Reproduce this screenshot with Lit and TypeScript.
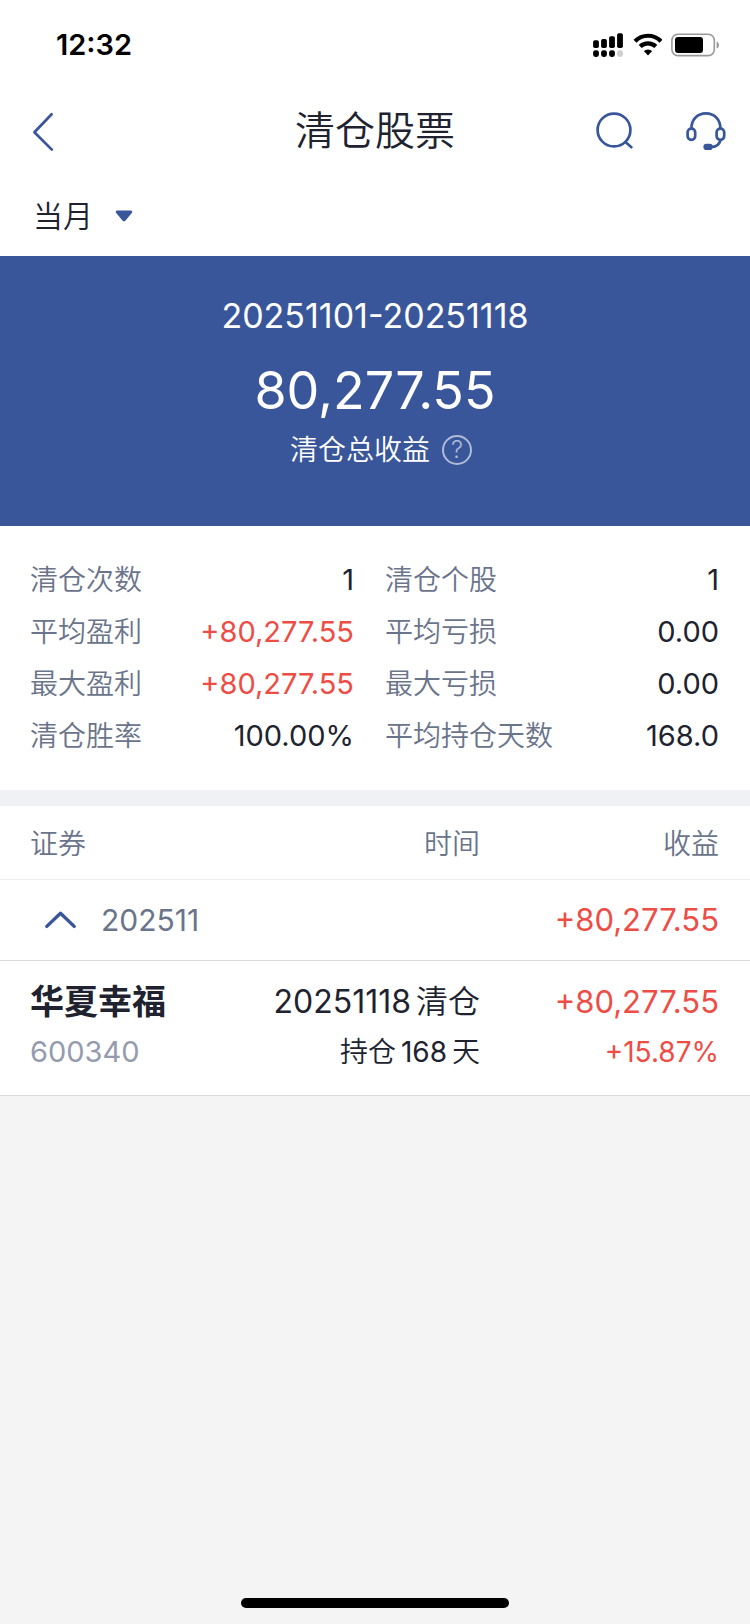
import { LitElement, html, svg, css, nothing } from "lit";
import { customElement, state } from "lit/decorators.js";
import { classMap } from "lit/directives/class-map.js";

interface Stat {
  label: string;
  value: string;
  gain?: boolean;
}

interface Holding {
  name: string;
  code: string;
  closedOn: string;
  days: number;
  profit: string;
  rate: string;
}

const STATS: Stat[] = [
  { label: "清仓次数", value: "1" },
  { label: "清仓个股", value: "1" },
  { label: "平均盈利", value: "+80,277.55", gain: true },
  { label: "平均亏损", value: "0.00" },
  { label: "最大盈利", value: "+80,277.55", gain: true },
  { label: "最大亏损", value: "0.00" },
  { label: "清仓胜率", value: "100.00%" },
  { label: "平均持仓天数", value: "168.0" },
];

const HOLDINGS: Holding[] = [
  {
    name: "华夏幸福",
    code: "600340",
    closedOn: "20251118",
    days: 168,
    profit: "+80,277.55",
    rate: "+15.87%",
  },
];

const signalIcon = html`<svg width="32" height="26" viewBox="0 0 32 26" aria-hidden="true">
  <rect x="1.1" y="8.2" width="5.8" height="7.8" rx="1.8" />
  <rect x="9.1" y="7" width="5.8" height="9" rx="1.8" />
  <rect x="17.1" y="4.2" width="5.8" height="11.8" rx="1.8" />
  <rect x="25.1" y="1.2" width="5.8" height="14.8" rx="1.8" />
  <rect x="1.1" y="18.2" width="5.8" height="6.8" rx="2.4" />
  <rect x="9.1" y="18.2" width="5.8" height="6.8" rx="2.4" />
  <rect x="17.1" y="18.2" width="5.8" height="6.8" rx="2.4" />
  <rect x="25.1" y="18.2" width="5.8" height="6.8" rx="2.4" fill="#d0d0d0" />
</svg>`;

const wifiIcon = html`<svg width="30" height="26" viewBox="0 0 30 26" aria-hidden="true">
  <g fill="none" stroke="#000" stroke-width="4.2">
    <path d="M3 9.2a18.2 18.2 0 0 1 26 0" />
    <path d="M8.2 14.6a11.2 11.2 0 0 1 15.6 0" />
  </g>
  <path d="M16 23.4l-4.2-4.3a6.2 6.2 0 0 1 8.4 0z" />
</svg>`;

const batteryIcon = html`<svg width="50" height="26" viewBox="0 0 50 26" aria-hidden="true">
  <rect x="1.9" y="2.2" width="42.4" height="21.4" rx="6" fill="none" stroke="#999" stroke-width="1.6" />
  <rect x="5" y="5" width="28" height="16" rx="3" />
  <path d="M46.6 9.4c3.2 1.2 3.2 6 0 7.2z" fill="#999" />
</svg>`;

const backIcon = html`<svg width="24" height="42" viewBox="0 0 24 42" aria-hidden="true">
  <path d="M21.6 3.2L4.4 21.2L21.8 38.6" class="line" />
</svg>`;

const searchIcon = html`<svg width="40" height="40" viewBox="0 0 40 40" aria-hidden="true">
  <circle cx="19" cy="19" r="16.4" class="line" />
  <path d="M31 31.4L36.4 36.2" class="line" />
</svg>`;

const serviceIcon = html`<svg width="42" height="40" viewBox="0 0 42 40" aria-hidden="true">
  <path d="M6.4 17.6C6.4 8.4 12.6 2.4 20.9 2.4S35.4 8.4 35.4 17.6" class="line" />
  <rect x="2.6" y="17.6" width="7.6" height="11.2" rx="3.7" class="line" />
  <rect x="31.6" y="17.6" width="7.6" height="11.2" rx="3.7" class="line" />
  <path d="M35.4 29.4C34.4 33.4 31 36 26 36" class="line" />
  <rect x="18.4" y="32.8" width="9.4" height="6.2" rx="3.1" fill="#39569a" />
</svg>`;

const caretIcon = html`<svg class="caret" width="18" height="12" viewBox="0 0 18 12" aria-hidden="true">
  <path d="M2 .6h14q1.8.6 1 2.2L10.6 10.6q-1.6 1.6-3.2 0L1 2.8Q.2 1.2 2 .6z" fill="#39569a" />
</svg>`;

@customElement("app-root")
export class AppRoot extends LitElement {
  @state() private open = true;

  static styles = css`
    :host {
      display: flex;
      flex-direction: column;
      min-height: 100vh;
      background: #f4f4f4;
      color: #20232f;
      font-family: Inter, "Noto Sans CJK SC", sans-serif;
      font-size: 28px;
      line-height: 40px;
    }
    * {
      box-sizing: border-box;
    }
    button,
    select {
      margin: 0;
      padding: 0;
      border: 0;
      background: none;
      color: inherit;
      font: inherit;
    }
    svg {
      display: block;
      flex: none;
    }
    .line {
      fill: none;
      stroke: #39569a;
      stroke-width: 2.7;
      stroke-linecap: round;
      stroke-linejoin: round;
    }
    .top {
      background: #fff;
    }
    .status {
      display: flex;
      align-items: center;
      justify-content: space-between;
      height: 88px;
      padding: 2px 30px 0 56px;
      color: #000;
      font-size: 29px;
      font-weight: 600;
    }
    .status-icons {
      display: flex;
      gap: 8px;
    }
    .nav {
      display: grid;
      grid-template-columns: 1fr auto 1fr;
      align-items: center;
      height: 88px;
      padding: 0 23px 2px;
    }
    .nav button {
      display: block;
    }
    .nav .back {
      padding: 2px 0 0 7px;
    }
    h1 {
      margin: 0;
      font-size: 40px;
      font-weight: 350;
      line-height: 56px;
    }
    .actions {
      display: flex;
      justify-content: flex-end;
      gap: 50px;
    }
    .filter {
      display: flex;
      align-items: center;
      height: 80px;
      padding: 0 33px;
    }
    .picker {
      display: grid;
      align-items: center;
    }
    .picker > * {
      grid-area: 1 / 1;
    }
    .picker select {
      appearance: none;
      padding-right: 40px;
      font-size: 30px;
      font-weight: 350;
    }
    .caret {
      justify-self: end;
      pointer-events: none;
    }
    .hero {
      display: flex;
      flex-direction: column;
      align-items: center;
      padding: 40px 30px 56px;
      background: #39569a;
      color: #fff;
    }
    .range {
      font-size: 34px;
    }
    .amount {
      margin-top: 16px;
      font-size: 52px;
      line-height: 78px;
    }
    .caption {
      display: flex;
      align-items: center;
      gap: 12px;
      padding-left: 12px;
      font-weight: 350;
    }
    .help {
      width: 30px;
      height: 30px;
      border: 2px solid #b0bbd7;
      border-radius: 50%;
      color: #b0bbd7;
      font-size: 24px;
      line-height: 26px;
    }
    .stats {
      display: grid;
      grid-template-columns: 1fr 1fr;
      margin: 0;
      padding: 28px 0;
      border-bottom: 16px solid #f0f1f4;
      background: #fff;
      line-height: 52px;
    }
    .stat {
      display: flex;
      justify-content: space-between;
      padding: 0 21px 0 30px;
    }
    .stat:nth-child(even) {
      padding: 0 31px 0 10px;
    }
    dt {
      color: #6a748b;
      font-weight: 350;
    }
    dd {
      margin: 0;
      font-size: 29px;
    }
    .gain {
      color: #ee4d46;
    }
    table {
      width: 100%;
      border-collapse: separate;
      border-spacing: 0;
      table-layout: fixed;
      background: #fff;
    }
    th,
    td {
      padding: 0;
      border-bottom: 1px solid #dbdce2;
      font-weight: 400;
      text-align: right;
    }
    th:first-child,
    td:first-child {
      padding-left: 30px;
      text-align: left;
    }
    th:last-child,
    td:last-child {
      padding-right: 31px;
    }
    .col-name,
    .col-time {
      width: 32%;
    }
    .head th {
      height: 74px;
      padding-top: 2px;
      border-color: #eeeff1;
      color: #6a748b;
      font-weight: 350;
    }
    .group td {
      height: 81px;
    }
    .toggle {
      display: flex;
      align-items: center;
      gap: 24px;
      padding-left: 14px;
      color: #6a748b;
      font-size: 30px;
    }
    .toggle .line {
      stroke-width: 3.4;
    }
    .closed svg {
      rotate: 180deg;
    }
    .item td {
      height: 135px;
      padding-top: 16px;
      vertical-align: top;
      line-height: 50px;
    }
    .date {
      font-size: 32px;
    }
    .profit {
      font-size: 31px;
    }
    .name {
      font-size: 34px;
      font-weight: 700;
    }
    .code {
      color: #949bae;
      font-size: 29px;
    }
    .cjk {
      font-weight: 350;
    }
    .after {
      margin-right: 5px;
    }
    .before {
      margin-left: 5px;
    }
    .home {
      width: 268px;
      height: 10px;
      margin: auto auto 16px;
      border-radius: 5px;
      background: #000;
    }
  `;

  private renderHolding(h: Holding) {
    return html`<tr class="item">
      <td>
        <div class="name">${h.name}</div>
        <div class="code">${h.code}</div>
      </td>
      <td>
        <div class="date"><span class="after">${h.closedOn}</span><span class="cjk">清仓</span></div>
        <div>
          <span class="cjk">持仓</span><span class="before after">${h.days}</span><span class="cjk">天</span>
        </div>
      </td>
      <td class="gain">
        <div class="profit">${h.profit}</div>
        <div>${h.rate}</div>
      </td>
    </tr>`;
  }

  render() {
    return html`
      <header class="top">
        <div class="status">
          <span>12:32</span>
          <div class="status-icons">${signalIcon}${wifiIcon}${batteryIcon}</div>
        </div>
        <nav class="nav">
          <button type="button" class="back" aria-label="返回">${backIcon}</button>
          <h1>清仓股票</h1>
          <div class="actions">
            <button type="button" aria-label="搜索">${searchIcon}</button>
            <button type="button" aria-label="客服">${serviceIcon}</button>
          </div>
        </nav>
        <div class="filter">
          <div class="picker">
            <select aria-label="时间">
              <option>当月</option>
            </select>
            ${caretIcon}
          </div>
        </div>
      </header>
      <section class="hero">
        <div class="range">20251101-20251118</div>
        <div class="amount">80,277.55</div>
        <div class="caption">
          清仓总收益
          <button type="button" class="help">?</button>
        </div>
      </section>
      <dl class="stats">
        ${STATS.map(
          (s) => html`<div class="stat">
            <dt>${s.label}</dt>
            <dd class=${classMap({ gain: !!s.gain })}>${s.value}</dd>
          </div>`,
        )}
      </dl>
      <table>
        <colgroup>
          <col class="col-name" />
          <col class="col-time" />
          <col />
        </colgroup>
        <thead>
          <tr class="head">
            <th scope="col">证券</th>
            <th scope="col">时间</th>
            <th scope="col">收益</th>
          </tr>
        </thead>
        <tbody>
          <tr class="group">
            <td colspan="2">
              <button
                type="button"
                class=${classMap({ toggle: true, closed: !this.open })}
                aria-expanded=${this.open}
                @click=${() => (this.open = !this.open)}
              >
                <svg width="33" height="20" viewBox="0 0 33 20" aria-hidden="true">
                  ${svg`<path class="line" d="M2.8 16.4L16.5 3.2L30.2 16.4" />`}
                </svg>
                202511
              </button>
            </td>
            <td class="gain profit">+80,277.55</td>
          </tr>
          ${this.open ? HOLDINGS.map((h) => this.renderHolding(h)) : nothing}
        </tbody>
      </table>
      <div class="home"></div>
    `;
  }
}
